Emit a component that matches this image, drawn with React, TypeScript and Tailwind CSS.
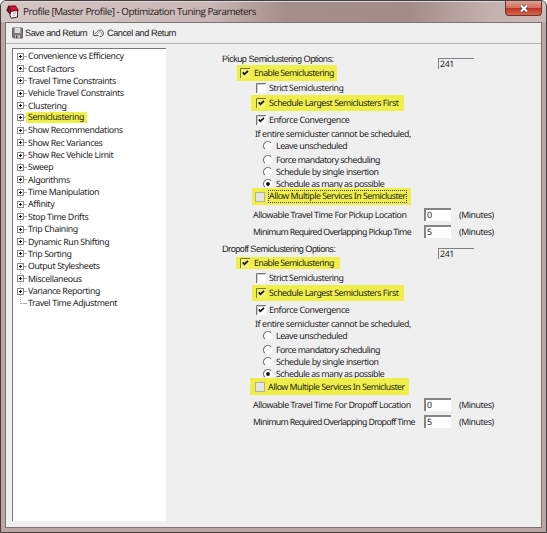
import type { ReactNode } from "react";

const treeItems = [
  "Convenience vs Efficiency",
  "Cost Factors",
  "Travel Time Constraints",
  "Vehicle Travel Constraints",
  "Clustering",
  "Semiclustering",
  "Show Recommendations",
  "Show Rec Variances",
  "Show Rec Vehicle Limit",
  "Sweep",
  "Algorithms",
  "Time Manipulation",
  "Affinity",
  "Stop Time Drifts",
  "Trip Chaining",
  "Dynamic Run Shifting",
  "Trip Sorting",
  "Output Stylesheets",
  "Miscellaneous",
  "Variance Reporting",
  "Travel Time Adjustment",
];

function AppIcon() {
  return (
    <svg className="h-[14px] w-[13px] shrink-0" viewBox="0 0 13 14">
      <path d="M4 5 L11.5 4.5 V12 L5.5 13.2 L4 11 Z" fill="#f6f3f3" stroke="#3a2425" strokeWidth="1" />
      <path d="M2.5 1 L9.5 0.8 L12.5 5.4 L5 6.4 Z" fill="#d3103c" stroke="#5b101c" strokeWidth="0.8" />
      <path d="M2.5 1 L5 6.4 L4 9 L0.8 5.5 Z" fill="#8d1027" stroke="#301013" strokeWidth="0.8" />
      <path d="M7 8.4 L10 7.8 M7 10.4 L9 10" stroke="#99898b" strokeWidth="0.8" />
    </svg>
  );
}

function SaveIcon() {
  return (
    <svg className="h-[12px] w-[11px] shrink-0" viewBox="0 0 11 12">
      <path d="M0.5 1 H10.5 V11 H1.5 L0.5 10 Z" fill="#777" stroke="#666" />
      <path d="M2.5 1 H8.5 V6 H2.5 Z" fill="#d8d8d8" />
      <path d="M3 8 H8 V11 H3 Z" fill="#bcbcbc" />
      <path d="M4 8.5 H5.4 V11 H4 Z" fill="#444" />
    </svg>
  );
}

function UndoIcon() {
  return (
    <svg className="h-[9px] w-[13px] shrink-0" viewBox="0 0 13 10" fill="none">
      <path d="M2.8 5.4 C4.5 3.5 6 1.2 8.8 1.2 C12.6 1.2 13 7 9.8 8.4 H7.6" stroke="#555" strokeWidth="1" />
      <path d="M4.5 6.2 C6 4.5 7 3 8.6 3 C10.6 3 10.8 6 9 7" stroke="#777" strokeWidth="0.8" />
      <path d="M1 1.6 V7.3 H6.4" stroke="#444" strokeWidth="1" />
    </svg>
  );
}

function Check({ on, flat }: { on?: boolean; flat?: boolean }) {
  return (
    <svg className="h-[10px] w-[10px] shrink-0" viewBox="0 0 10 10">
      <rect width="10" height="10" fill={flat ? "#e4e4e4" : "#fff"} />
      {flat ? (
        <rect x="0.5" y="0.5" width="9" height="9" fill="none" stroke="#b3b391" />
      ) : (
        <>
          <path d="M0.5 10 V0.5 H10" fill="none" stroke="#777" />
          <path d="M1.5 9 V1.5 H9" fill="none" stroke="#a9a9a9" strokeWidth="0.6" />
        </>
      )}
      {on && <path d="M2.8 4.4 L4.4 6.3 L8 2.8" fill="none" stroke="#111" strokeWidth="1.8" />}
    </svg>
  );
}

function MarkedCheck() {
  return (
    <svg className="h-[10px] w-[10px] shrink-0" viewBox="0 0 10 10">
      <rect width="10" height="10" fill="#f4f26a" />
      <path d="M0.5 10 V0.5 H10" fill="none" stroke="#77762c" />
      <path d="M2.8 4.4 L4.4 6.3 L8 2.8" fill="none" stroke="#111" strokeWidth="1.8" />
    </svg>
  );
}

function Radio({ on }: { on?: boolean }) {
  return (
    <svg className="h-[10px] w-[10px] shrink-0" viewBox="0 0 10 10">
      <circle cx="5" cy="5" r="4" fill="#fff" />
      <path d="M1.8 8 A4.2 4.2 0 0 1 8 1.8" fill="none" stroke="#6d6d6d" strokeWidth="1.1" />
      {on && <circle cx="5" cy="5" r="1.9" fill="#111" />}
    </svg>
  );
}

function Row({ className, children }: { className: string; children: ReactNode }) {
  return <div className={`flex items-center whitespace-nowrap ${className}`}>{children}</div>;
}

function Minutes({ label, value, labelClass }: { label: string; value: string; labelClass: string }) {
  return (
    <Row className="h-[17px] pl-[35px]">
      <span className={`w-[171px] ${labelClass}`}>{label}</span>
      <span className="h-[13px] w-[27px] border-t-2 border-l-2 border-[#858585] bg-white pl-[1px] leading-[11px]">{value}</span>
      <span className="ml-[8px] tracking-[-0.45px]">(Minutes)</span>
    </Row>
  );
}

type GroupProps = {
  kind: "Pickup" | "Dropoff";
  enableClass: string;
  largestClass: string;
  allowClass: string;
  focused?: boolean;
};

function Group({ kind, enableClass, largestClass, allowClass, focused }: GroupProps) {
  return (
    <section className="h-[190px]">
      <Row className="h-[13px] pl-[4px]">
        <span className="w-[216px] pt-[1px] font-['Liberation_Sans',sans-serif] text-[9.2px] tracking-[-0.52px]">
          {kind} Semiclustering Options:
        </span>
        <span className="mt-[9px] h-[11px] w-[36px] border-t-[1.5px] border-l-[1.5px] border-[#808080] pl-[1px] leading-[11px]">241</span>
      </Row>
      <Row className="h-[16px]">
        <div className={`flex items-center bg-[#f0ee4a] ${enableClass}`}>
          <MarkedCheck />
          <span className="ml-[4px] tracking-[-0.56px]">Enable Semiclustering</span>
        </div>
      </Row>
      <Row className="h-[13px] pl-[38px]">
        <Check />
        <span className="ml-[3px] tracking-[-0.5px]">Strict Semiclustering</span>
      </Row>
      <Row className="mt-[1px] h-[16px]">
        <div className={`flex h-[16px] items-center bg-[#f0ee4a] ${largestClass}`}>
          <MarkedCheck />
          <span className="ml-[3px] tracking-[-0.46px]">Schedule Largest Semiclusters First</span>
        </div>
      </Row>
      <Row className="h-[17px] pl-[38px]">
        <Check on />
        <span className="ml-[3px] tracking-[-0.4px]">Enforce Convergence</span>
      </Row>
      <Row className="h-[11px] pl-[37px] tracking-[-0.4px]">If entire semicluster cannot be scheduled,</Row>
      <Row className="h-[14px] pl-[45px] tracking-[-0.48px]">
        <Radio />
        <span className="ml-[3px]">Leave unscheduled</span>
      </Row>
      <Row className="h-[13px] pl-[45px] tracking-[-0.53px]">
        <Radio />
        <span className="ml-[3px]">Force mandatory scheduling</span>
      </Row>
      <Row className="h-[12px] pl-[45px] tracking-[-0.46px]">
        <Radio />
        <span className="ml-[3px]">Schedule by single insertion</span>
      </Row>
      <Row className="h-[10px] pt-[2px] pl-[45px] tracking-[-0.5px]">
        <Radio on />
        <span className="ml-[3px]">Schedule as many as possible</span>
      </Row>
      <Row className="h-[17px] tracking-[-0.49px]">
        <div className={`flex h-[17px] items-center bg-[#f0ee4a] ${allowClass}`}>
          <Check flat />
          <span className={focused ? "ml-[3px] border border-dotted border-[#444400] leading-[11px]" : "ml-[3px]"}>
            Allow Multiple Services In Semicluster
          </span>
        </div>
      </Row>
      <div className="h-[1px]" />
      <Minutes label={`Allowable Travel Time For ${kind} Location`} value="0" labelClass="tracking-[-0.46px]" />
      <Minutes label={`Minimum Required Overlapping ${kind} Time`} value="5" labelClass="tracking-[-0.68px]" />
    </section>
  );
}

export default function App() {
  return (
    <div className="flex h-[533px] w-[547px] flex-col overflow-hidden rounded-t-[6px] border border-[#443f40] bg-[#bda5a2] px-[4px] pb-[4px] font-['Noto_Sans',sans-serif] text-[8.8px] leading-[12px] tracking-[-0.38px] text-[#1c1c1c] [text-rendering:geometricPrecision]">
      <header className="-mx-[4px] flex h-[21px] shrink-0 items-start border-t border-[#e3d7d5] bg-[linear-gradient(90deg,#d5c7c4_0%,#c9b8b5_38%,#a58f8a_52%,#a38c87_75%,#c4b2b0_90%,#cbbab8_100%)] pl-[5px]">
        <div className="mt-[3px]">
          <AppIcon />
        </div>
        <h1 className="mt-[1px] ml-[4px] whitespace-nowrap font-['Open_Sans',sans-serif] text-[9.8px] leading-[17px] tracking-[-0.46px] text-[#1d1719]">
          Profile [Master Profile] - Optimization Tuning Parameters
        </h1>
        <div className="-mt-[1px] mr-[4px] ml-auto flex h-[15px] w-[37px] items-center justify-center rounded-b-[4px] border border-t-0 border-[#6b3532] bg-[linear-gradient(#e0a194_0%,#d3705f_48%,#bd3420_52%,#d5654b_100%)]">
          <svg className="h-[9px] w-[10px]" viewBox="0 0 10 9">
            <path d="M2 1.5 L8 7.5 M8 1.5 L2 7.5" stroke="#5a4a50" strokeWidth="3.6" />
            <path d="M2 1.5 L8 7.5 M8 1.5 L2 7.5" stroke="#fff" strokeWidth="2" />
          </svg>
        </div>
      </header>
      <main className="flex min-h-0 flex-1 flex-col border border-[#7d7172] bg-[#efefef]">
        <div className="flex h-[21px] shrink-0 items-center border-b border-[#b5b5b5] pl-[6px] font-['Liberation_Sans',sans-serif] text-[9.2px] tracking-[-0.46px] whitespace-nowrap">
          <SaveIcon />
          <span className="ml-[2px] w-[67px]">Save and Return</span>
          <UndoIcon />
          <span className="ml-[2px]">Cancel and Return</span>
        </div>
        <div className="flex min-h-0 flex-1 pt-[4px]">
          <nav className="relative ml-[6px] h-[473px] w-[154px] shrink-0 border-t border-l border-[#777] bg-white pt-[1px]">
            <div className="absolute top-[8px] left-[7px] h-[247px] border-l border-dotted border-[#b8b8b8]" />
            {treeItems.map((item, i) => (
              <div key={item} className="relative flex h-[12.36px] items-center whitespace-nowrap pl-[4px]">
                {i < treeItems.length - 1 ? (
                  <svg className="h-[7px] w-[7px] shrink-0" viewBox="0 0 7 7">
                    <rect x="0.5" y="0.5" width="6" height="6" fill="#fff" stroke="#888" />
                    <path d="M2 3.5 H5 M3.5 2 V5" stroke="#111" />
                  </svg>
                ) : (
                  <span className="ml-[3px] w-[4px] border-t border-dotted border-[#a8a8a8]" />
                )}
                <span className="w-[2px] border-t border-dotted border-[#a8a8a8]" />
                {item === "Semiclustering" ? (
                  <span className="bg-[#f0ee4a] pr-[3px] pl-[2px] leading-[11px]">{item}</span>
                ) : (
                  <span className="pl-[2px]">{item}</span>
                )}
              </div>
            ))}
          </nav>
          <div className="ml-[52px] flex-1 pt-[4px]">
            <Group
              kind="Pickup"
              enableClass="ml-[19px] h-[16px] w-[100px] pl-[3px]"
              largestClass="ml-[33px] w-[153px] pl-[5px]"
              allowClass="ml-[34px] w-[159px] pl-[3px]"
              focused
            />
            <Group
              kind="Dropoff"
              enableClass="ml-[18px] h-[12px] w-[104px] pl-[4px]"
              largestClass="ml-[34px] w-[152px] pl-[4px]"
              allowClass="ml-[32px] w-[159px] pl-[5px]"
            />
          </div>
        </div>
      </main>
    </div>
  );
}
